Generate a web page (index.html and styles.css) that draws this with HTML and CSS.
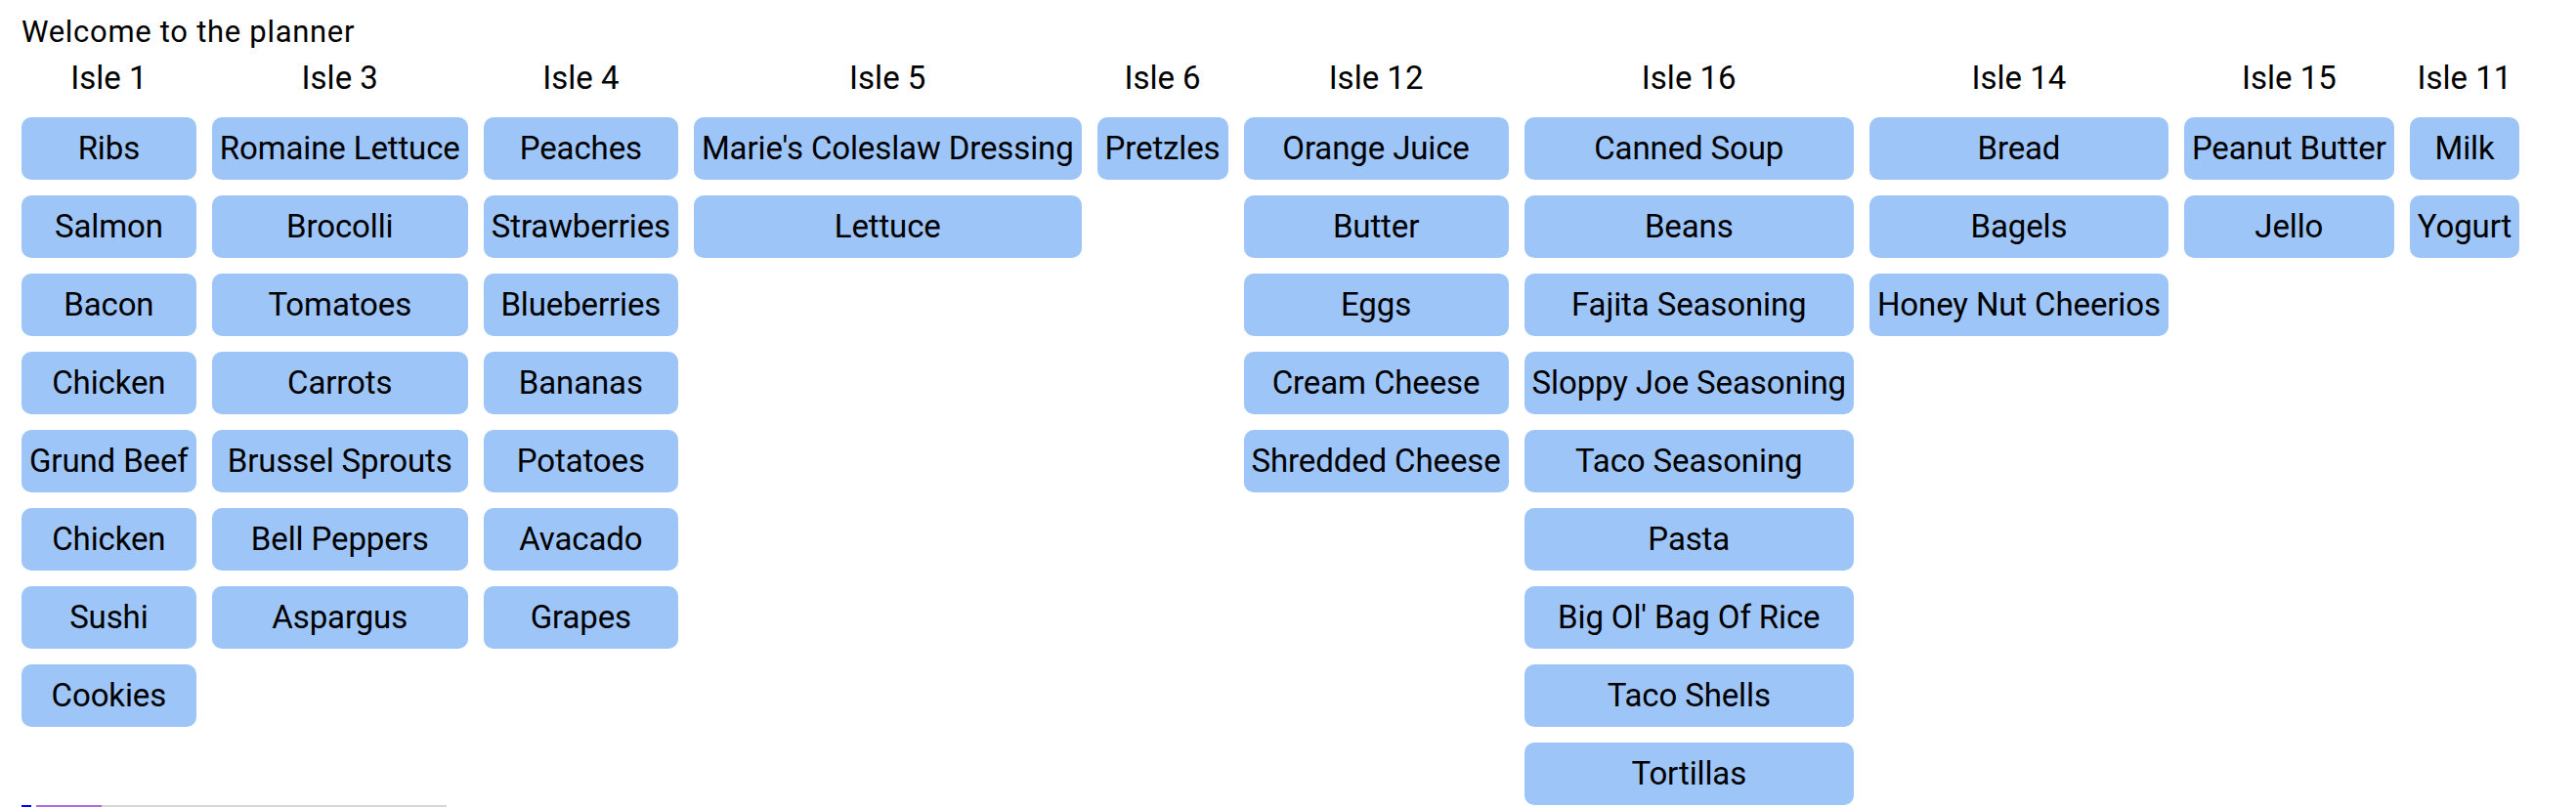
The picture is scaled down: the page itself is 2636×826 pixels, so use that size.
FILE: index.html
```html
<!DOCTYPE html>
<html>
<head>
<meta charset="utf-8">
<title>Planner</title>
<link rel="stylesheet" href="styles.css">
</head>
<body>
<div class="welcome">Welcome to the planner</div>
<div class="isles">
  <div class="isle">
    <div class="isle-title">Isle 1</div>
    <div class="item">Ribs</div>
    <div class="item">Salmon</div>
    <div class="item">Bacon</div>
    <div class="item">Chicken</div>
    <div class="item">Grund Beef</div>
    <div class="item">Chicken</div>
    <div class="item">Sushi</div>
    <div class="item">Cookies</div>
  </div>
  <div class="isle">
    <div class="isle-title">Isle 3</div>
    <div class="item">Romaine Lettuce</div>
    <div class="item">Brocolli</div>
    <div class="item">Tomatoes</div>
    <div class="item">Carrots</div>
    <div class="item">Brussel Sprouts</div>
    <div class="item">Bell Peppers</div>
    <div class="item">Aspargus</div>
  </div>
  <div class="isle">
    <div class="isle-title">Isle 4</div>
    <div class="item">Peaches</div>
    <div class="item">Strawberries</div>
    <div class="item">Blueberries</div>
    <div class="item">Bananas</div>
    <div class="item">Potatoes</div>
    <div class="item">Avacado</div>
    <div class="item">Grapes</div>
  </div>
  <div class="isle">
    <div class="isle-title">Isle 5</div>
    <div class="item">Marie's Coleslaw Dressing</div>
    <div class="item">Lettuce</div>
  </div>
  <div class="isle">
    <div class="isle-title">Isle 6</div>
    <div class="item">Pretzles</div>
  </div>
  <div class="isle">
    <div class="isle-title">Isle 12</div>
    <div class="item">Orange Juice</div>
    <div class="item">Butter</div>
    <div class="item">Eggs</div>
    <div class="item">Cream Cheese</div>
    <div class="item">Shredded Cheese</div>
  </div>
  <div class="isle">
    <div class="isle-title">Isle 16</div>
    <div class="item">Canned Soup</div>
    <div class="item">Beans</div>
    <div class="item">Fajita Seasoning</div>
    <div class="item">Sloppy Joe Seasoning</div>
    <div class="item">Taco Seasoning</div>
    <div class="item">Pasta</div>
    <div class="item">Big Ol' Bag Of Rice</div>
    <div class="item">Taco Shells</div>
    <div class="item">Tortillas</div>
  </div>
  <div class="isle">
    <div class="isle-title">Isle 14</div>
    <div class="item">Bread</div>
    <div class="item">Bagels</div>
    <div class="item">Honey Nut Cheerios</div>
  </div>
  <div class="isle">
    <div class="isle-title">Isle 15</div>
    <div class="item">Peanut Butter</div>
    <div class="item">Jello</div>
  </div>
  <div class="isle">
    <div class="isle-title">Isle 11</div>
    <div class="item">Milk</div>
    <div class="item">Yogurt</div>
  </div>
</div>
<div class="progress">
  <div class="seg seg-blue"></div>
  <div class="seg seg-purple"></div>
  <div class="seg seg-gray"></div>
</div>
</body>
</html>
```
FILE: styles.css
```css
html, body {
  margin: 0;
  padding: 0;
  background: #ffffff;
}
body {
  font-family: Roboto, "Liberation Sans", sans-serif;
  color: #000000;
  padding: 15px 22px 0 22px;
}
.welcome {
  font-size: 31px;
  line-height: 36px;
  letter-spacing: 0.7px;
}
.isles {
  display: flex;
  align-items: flex-start;
  gap: 16px;
  margin-top: 9px;
}
.isle {
  display: flex;
  flex-direction: column;
  gap: 16px;
}
.isle-title {
  font-size: 33px;
  line-height: 40px;
  text-align: center;
  margin-bottom: 4px;
}
.item {
  background: #9ec5f8;
  border-radius: 10px;
  height: 64px;
  line-height: 64px;
  font-size: 33px;
  letter-spacing: -0.12px;
  padding: 0 8px;
  text-align: center;
  white-space: nowrap;
}
.progress {
  display: flex;
  gap: 5px;
  height: 4px;
}
.seg { height: 4px; }
.seg-blue { width: 10px; background: #0000ff; }
.seg-purple { width: 67px; background: #b36ae2; }
.seg-gray { width: 353px; background: #d6d6d6; margin-left: -5px; }
```
